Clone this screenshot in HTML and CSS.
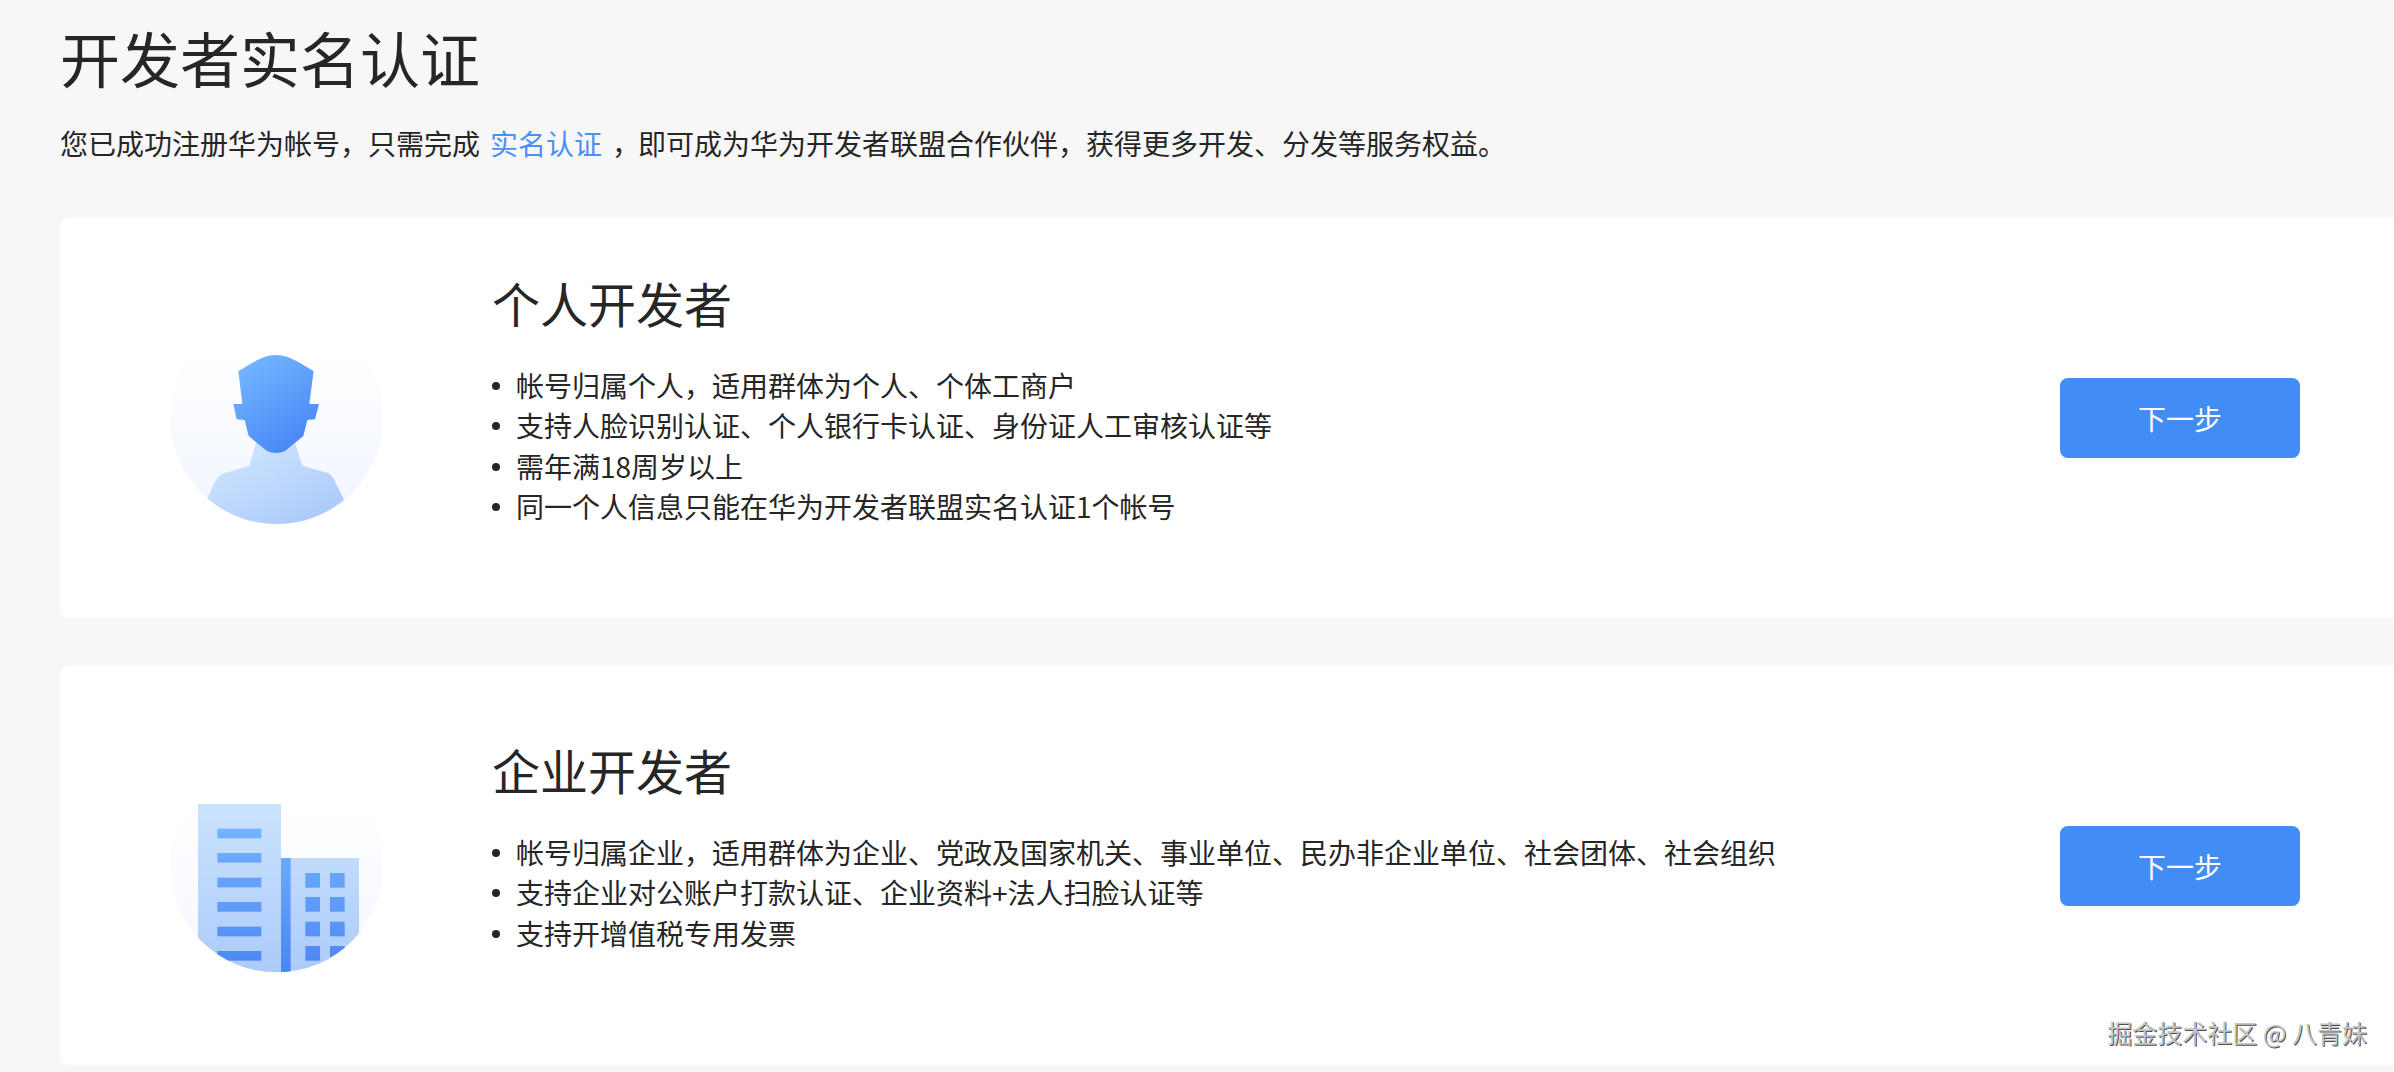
FILE: index.html
```html
<!DOCTYPE html>
<html lang="zh-CN">
<head>
  <meta charset="UTF-8">
  <title>开发者实名认证</title>
  <link rel="stylesheet" href="styles.css">
</head>
<body>
  <div class="page">
    <h1 class="page-title">开发者实名认证</h1>
    <p class="page-desc">您已成功注册华为帐号，只需完成<a class="link" href="#">实名认证</a><span class="comma">，</span>即可成为华为开发者联盟合作伙伴，获得更多开发、分发等服务权益。</p>

    <div class="card card-person">
      <svg class="card-icon" viewBox="0 0 840 660">
        <defs>
          <linearGradient id="discA" x1="0" y1="0" x2="0" y2="1">
            <stop offset="0.2" stop-color="#ffffff"/>
            <stop offset="1" stop-color="#eff5ff"/>
          </linearGradient>
          <linearGradient id="headA" gradientUnits="userSpaceOnUse" x1="320" y1="120" x2="500" y2="390">
            <stop offset="0" stop-color="#72b6ff"/>
            <stop offset="1" stop-color="#4684f5"/>
          </linearGradient>
          <linearGradient id="bodyA" gradientUnits="userSpaceOnUse" x1="400" y1="380" x2="520" y2="610">
            <stop offset="0" stop-color="#c9e0fe"/>
            <stop offset="1" stop-color="#abcafa"/>
          </linearGradient>
          <clipPath id="clipA"><circle cx="410" cy="292" r="320"/></clipPath>
        </defs>
        <circle cx="410" cy="292" r="320" fill="url(#discA)"/>
        <path clip-path="url(#clipA)" fill="url(#bodyA)" d="M348 370 L328 437 L245 462 Q232 470 225 485 L200 540 L200 640 L620 640 L610 535 L585 485 Q578 468 565 460 L487 437 L465 370 Z"/>
        <path fill="url(#headA)" d="M408 105 C365 105 335 132 295 153 L307 252 L280 252 L290 298 L314 300 L326 348 L382 394 Q408 404 434 394 L490 348 L502 300 L525 298 L537 252 L508 252 L521 153 C481 132 451 105 408 105 Z"/>
      </svg>
      <div class="card-body">
        <h2 class="card-title">个人开发者</h2>
        <ul class="card-list">
          <li>帐号归属个人，适用群体为个人、个体工商户</li>
          <li>支持人脸识别认证、个人银行卡认证、身份证人工审核认证等</li>
          <li>需年满18周岁以上</li>
          <li>同一个人信息只能在华为开发者联盟实名认证1个帐号</li>
        </ul>
      </div>
      <button class="btn-next">下一步</button>
    </div>

    <div class="card card-company">
      <svg class="card-icon" viewBox="0 0 840 660">
        <defs>
          <linearGradient id="discB" x1="0" y1="0" x2="0" y2="1">
            <stop offset="0.2" stop-color="#ffffff"/>
            <stop offset="1" stop-color="#f3f7ff"/>
          </linearGradient>
          <linearGradient id="wallB" gradientUnits="userSpaceOnUse" x1="0" y1="72" x2="0" y2="577">
            <stop offset="0" stop-color="#cbe3fe"/>
            <stop offset="1" stop-color="#adcbfa"/>
          </linearGradient>
          <linearGradient id="winB" gradientUnits="userSpaceOnUse" x1="0" y1="146" x2="0" y2="577">
            <stop offset="0" stop-color="#72b4ff"/>
            <stop offset="1" stop-color="#4b85f4"/>
          </linearGradient>
          <clipPath id="clipB">
            <rect x="0" y="0" width="840" height="257"/>
            <circle cx="410" cy="257" r="320"/>
          </clipPath>
        </defs>
        <circle cx="410" cy="257" r="320" fill="url(#discB)"/>
        <g clip-path="url(#clipB)">
          <rect x="174" y="72" width="249" height="520" fill="url(#wallB)"/>
          <rect x="423" y="234" width="234" height="358" fill="url(#wallB)"/>
          <g fill="url(#winB)">
            <rect x="423" y="234" width="29" height="358"/>
            <rect x="232" y="146" width="132" height="29"/>
            <rect x="232" y="219" width="132" height="29"/>
            <rect x="232" y="293" width="132" height="29"/>
            <rect x="232" y="366" width="132" height="29"/>
            <rect x="232" y="440" width="132" height="29"/>
            <rect x="232" y="513" width="132" height="29"/>
            <rect x="496" y="279" width="44" height="44"/>
            <rect x="570" y="279" width="44" height="44"/>
            <rect x="496" y="351" width="44" height="44"/>
            <rect x="570" y="351" width="44" height="44"/>
            <rect x="496" y="425" width="44" height="44"/>
            <rect x="570" y="425" width="44" height="44"/>
            <rect x="496" y="498" width="44" height="44"/>
            <rect x="570" y="498" width="44" height="44"/>
          </g>
        </g>
      </svg>
      <div class="card-body">
        <h2 class="card-title">企业开发者</h2>
        <ul class="card-list">
          <li>帐号归属企业，适用群体为企业、党政及国家机关、事业单位、民办非企业单位、社会团体、社会组织</li>
          <li>支持企业对公账户打款认证、企业资料+法人扫脸认证等</li>
          <li>支持开增值税专用发票</li>
        </ul>
      </div>
      <button class="btn-next">下一步</button>
    </div>
  </div>
  <div class="watermark">掘金技术社区 @ 八青妹</div>
</body>
</html>
```

FILE: styles.css
```css
* {
  margin: 0;
  padding: 0;
  box-sizing: border-box;
}

html, body {
  height: 100%;
  overflow: hidden;
}

body {
  position: relative;
  font-family: "Noto Sans CJK SC", "Liberation Sans", sans-serif;
  background: #f7f7f7;
  color: #262626;
}

.page {
  padding-left: 60px;
}

.page-title {
  padding-top: 16px;
  font-size: 60px;
  line-height: 82px;
  font-weight: 400;
}

.page-desc {
  margin-top: 24px;
  margin-bottom: 54px;
  font-size: 28px;
  line-height: 42px;
}

.link {
  margin-left: 10px;
  color: #4a90f5;
  text-decoration: none;
}

.comma {
  margin-left: 10px;
  margin-right: -2px;
}

.card {
  display: flex;
  align-items: flex-start;
  background: #fff;
  border-radius: 8px 0 0 8px;
  padding-left: 80px;
  padding-right: 94px;
}

.card-person {
  height: 400px;
  margin-bottom: 48px;
}

.card-company {
  height: 399px;
}

.card-icon {
  flex: none;
  width: 280px;
  height: 220px;
}

.card-person .card-icon {
  margin-top: 102px;
}

.card-company .card-icon {
  margin-top: 114px;
}

.card-body {
  flex: 1;
  margin-left: 72px;
}

.card-person .card-body {
  padding-top: 49px;
}

.card-company .card-body {
  padding-top: 68px;
}

.card-title {
  font-size: 48px;
  line-height: 70px;
  font-weight: 400;
}

.card-list {
  list-style: none;
  margin-top: 28px;
}

.card-list li {
  position: relative;
  padding-left: 24px;
  font-size: 28px;
  line-height: 40.4px;
}

.card-list li::before {
  content: "";
  position: absolute;
  left: 0;
  top: 17px;
  width: 8px;
  height: 8px;
  border-radius: 50%;
  background: #262626;
}

.btn-next {
  flex: none;
  align-self: center;
  width: 240px;
  height: 80px;
  border: none;
  border-radius: 8px;
  background: #428df5;
  color: #fff;
  font-family: inherit;
  font-size: 28px;
}

.watermark {
  position: absolute;
  right: 27px;
  top: 1014px;
  font-size: 25px;
  line-height: 36px;
  color: #c4c4c4;
  text-shadow: 1px 1px 0.5px rgba(0,0,0,0.7);
}
```
